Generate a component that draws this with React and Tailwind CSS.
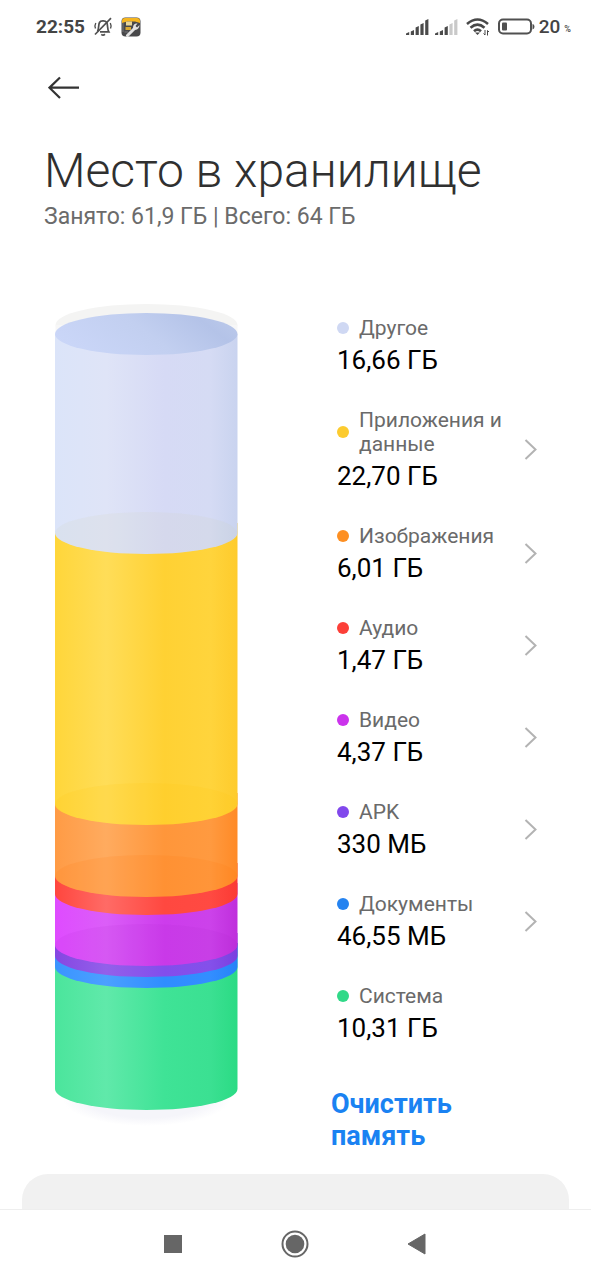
import React from "react";

const categories = [
  { name: "Другое", size: "16,66 ГБ", dot: "bg-[#cfd8f3]", link: false },
  { name: "Приложения и данные", size: "22,70 ГБ", dot: "bg-[#fccb2f]", link: true },
  { name: "Изображения", size: "6,01 ГБ", dot: "bg-[#fd8f22]", link: true },
  { name: "Аудио", size: "1,47 ГБ", dot: "bg-[#fc3f38]", link: true },
  { name: "Видео", size: "4,37 ГБ", dot: "bg-[#cb33ec]", link: true },
  { name: "APK", size: "330 МБ", dot: "bg-[#8148ec]", link: true },
  { name: "Документы", size: "46,55 МБ", dot: "bg-[#2583f0]", link: true },
  { name: "Система", size: "10,31 ГБ", dot: "bg-[#31d988]", link: false },
];

// Listed from the base up: each layer is painted over the one beneath it.
const layers = [
  { id: "system", top: 640, bottom: 786, stops: ["#4be59c", "#60e9aa", "#3fe396", "#3be092", "#2bdb84"] },
  { id: "docs", top: 640, bottom: 664, stops: ["#3a94ff", "#4ba0ff", "#2f8dff", "#338eff", "#2583f8"] },
  { id: "apk", top: 630, bottom: 653, stops: ["#8546e2", "#9360ea", "#824eec", "#8450ea", "#7a3fe0"] },
  { id: "video", top: 580, bottom: 642, stops: ["#df4bff", "#db5ef8", "#cd3cec", "#cc42ea", "#bf2fdc"] },
  { id: "audio", top: 560, bottom: 591, stops: ["#ff463e", "#ff6b66", "#ff4840", "#ff4a42", "#fb3a34"] },
  { id: "images", top: 490, bottom: 573, stops: ["#ff9b45", "#ffab5f", "#ff963a", "#ff9a40", "#ff8a26"] },
  { id: "apps", top: 220, bottom: 501, stops: ["#ffd63a", "#ffdd58", "#ffd133", "#ffd43c", "#fecb2c"] },
  { id: "other", top: 31, bottom: 230, stops: ["#dbe4f9", "#dfe4f7", "#d6daf5", "#d5dbf4", "#c9d3ef"] },
];

const backRims = [
  { y: 209, opacity: 0.1, color: "#d2cfa0" },
  { y: 480, opacity: 0.14, color: "#ffc30f" },
  { y: 552, opacity: 0.14, color: "#ff7a10" },
  { y: 621, opacity: 0.09, color: "#a81ccc" },
];

const offsets = ["0%", "28%", "60%", "85%", "100%"];

function StorageCylinder() {
  return (
    <svg width="185" height="824" viewBox="0 0 185 824" role="img" aria-label="Диаграмма хранилища" className="block shrink-0">
      <defs>
        {layers.map((l) => (
          <linearGradient key={l.id} id={l.id} x1="0" x2="1" y1="0" y2="0">
            {l.stops.map((c, i) => (
              <stop key={i} offset={offsets[i]} stopColor={c} />
            ))}
          </linearGradient>
        ))}
        <linearGradient id="lid" x1="0" x2="1" y1="0.6" y2="0.3">
          <stop offset="0%" stopColor="#cad6f8" />
          <stop offset="50%" stopColor="#c2cff0" />
          <stop offset="85%" stopColor="#b4c3e8" />
          <stop offset="100%" stopColor="#bac8ea" />
        </linearGradient>
        <radialGradient id="shade">
          <stop offset="70%" stopColor="#f5f5fa" />
          <stop offset="100%" stopColor="#ffffff" />
        </radialGradient>
      </defs>
      <ellipse cx="92.500" cy="796" rx="84" ry="27" fill="url(#shade)" />
      <ellipse cx="92.500" cy="22" rx="91" ry="21" fill="#f4f4f3" />
      <path d="M1.500 22H183.500V31H1.500Z" fill="#f7f7f7" />
      {layers.map((l) => (
        <path
          key={l.id}
          d={`M1 ${l.top}V${l.bottom}A91.25 21 0 0 0 183.5 ${l.bottom}V${l.top}Z`}
          fill={`url(#${l.id})`}
        />
      ))}
      {backRims.map((r) => (
        <ellipse key={r.y} cx="92.250" cy={r.y + 21} rx="91.250" ry="21" fill={r.color} opacity={r.opacity} />
      ))}
      <ellipse cx="92.250" cy="31" rx="91.250" ry="21" fill="url(#lid)" />
    </svg>
  );
}

function Signal({ strength }) {
  return (
    <svg width="23" height="17" viewBox="0 0 23 17" aria-hidden="true">
      {[3, 5, 9, 12, 16].map((h, i) => (
        <path
          key={i}
          d={`M${i * 4.8} 16V${17.5 - h}L${i * 4.8 + 3.2} ${16 - h}V16Z`}
          fill={i < strength ? "#4a4a4a" : "#c9c9c9"}
        />
      ))}
    </svg>
  );
}

function StatusBar() {
  return (
    <div className="flex h-[54px] items-center justify-between pr-5 pl-9 text-[#444]">
      <div className="flex items-center">
        <span className="text-[19px] leading-6 font-bold">22:55</span>
        <svg width="20" height="20" viewBox="0 0 20 20" fill="none" stroke="#505050" strokeWidth="1.700" className="ml-2" aria-hidden="true">
          <path d="M4.500 14.500C6 12.500 5.200 8 6.500 5.500C7.500 3.600 12 3.200 13.600 5.300C15.200 8 14 12 15.800 14.800H7" />
          <path d="M18 1.200L2 17.500" />
          <path d="M8.300 17.300Q10 18.800 12 17.300" />
          <path d="M2.800 6Q1.300 8.800 2.500 11.500M17.300 6Q18.700 8.800 17.500 11.500" strokeWidth="1.400" />
        </svg>
        <svg width="20" height="20" viewBox="0 0 20 20" className="ml-2" aria-hidden="true">
          <rect x="0.500" y="0.500" width="19" height="19" rx="4" fill="#48484a" />
          <path d="M1 6V4Q1 1 4 1H16Q19 1 19 4V6L14 4.500H6Z" fill="#f5b51f" />
          <rect x="5" y="4.500" width="6" height="4" fill="#e8d59a" />
          <rect x="4.500" y="10" width="5.500" height="3" fill="#d9a832" />
          <path d="M2 6V15M3.500 15H7" stroke="#77777a" strokeWidth="1" />
          <path d="M6.500 18.500L14 11" stroke="#e2e2e2" strokeWidth="3" strokeLinecap="round" />
          <path d="M18.500 8L16 10.500L14.500 9L16.500 6.500C13.500 6 11.500 8.500 12.300 11.200C13.500 14.200 18.500 13 18.500 8Z" fill="#e2e2e2" />
        </svg>
      </div>
      <div className="flex items-center">
        <Signal strength={5} />
        <span className="w-1.5" />
        <Signal strength={3} />
        <svg width="24" height="20" viewBox="0 0 24 20" fill="none" stroke="#484848" strokeWidth="2.600" className="ml-2" aria-hidden="true">
          <path d="M1 7Q11.500 -2 22 7" />
          <path d="M4.500 10.700Q11.500 4.500 18.500 10.700" />
          <path d="M8 14.200Q11.500 11 15 14.200" />
          <path d="M9 15.500H14L11.500 18Z" fill="#484848" stroke="none" />
          <path d="M19 13V18L17.500 16.500M21.500 18.500V13.500L23 15" strokeWidth="1" />
        </svg>
        <svg width="37" height="18" viewBox="0 0 37 18" className="ml-2" aria-hidden="true">
          <rect x="1" y="1.500" width="32" height="14" rx="4" fill="none" stroke="#505050" strokeWidth="2" />
          <rect x="4" y="4.500" width="5" height="8" rx="1" fill="#505050" />
          <path d="M34.500 6V11.500Q36.500 11 36.500 8.700T34.500 6Z" fill="#505050" />
        </svg>
        <span className="ml-1 text-[19px] leading-6 font-medium">20</span>
        <span className="ml-1 pt-1 text-[9px] leading-4 font-medium">%</span>
      </div>
    </div>
  );
}

function Category({ item }) {
  const Row = item.link ? "a" : "div";
  return (
    <li>
      <Row {...(item.link ? { href: "#" } : {})} className="flex items-center justify-between">
        <div className="w-[176px]">
          <div className="flex items-center gap-2.5">
            <span className={`size-3 shrink-0 rounded-full ${item.dot}`} />
            <span className="text-[21px] leading-6 text-[#6a6a6a]">{item.name}</span>
          </div>
          <div className="mt-1 text-[26px] leading-8 text-black">{item.size}</div>
        </div>
        {item.link && (
          <svg width="13" height="22" viewBox="0 0 13 22" fill="none" stroke="#b3b3b3" strokeWidth="2" aria-hidden="true">
            <path d="M1.500 1L11.500 10.500L1.500 20" />
          </svg>
        )}
      </Row>
    </li>
  );
}

export default function App() {
  return (
    <div className="flex min-h-screen flex-col bg-white font-['Roboto',sans-serif]">
      <StatusBar />
      <header className="px-11">
        <button type="button" aria-label="Назад" className="mt-5 ml-1 block h-7 w-8">
          <svg width="32" height="28" viewBox="0 0 32 28" fill="none" stroke="#333" strokeWidth="2.200" aria-hidden="true">
            <path d="M31 13.700H2M12 3.500L1.500 13.700L12 24" />
          </svg>
        </button>
        <h1 className="mt-[41px] text-[48px] leading-[56px] font-light text-[#303030]">Место в хранилище</h1>
        <p className="mt-1 text-[23px] leading-7 text-[#6b6b6b]">Занято: 61,9 ГБ | Всего: 64 ГБ</p>
      </header>
      <main className="mt-[72px] flex items-start justify-between pr-[54px] pl-[54px]">
        <StorageCylinder />
        <section className="w-[206px] pt-[13px]">
          <ul className="flex flex-col gap-8 pl-1.5">
            {categories.map((c) => (
              <Category key={c.name} item={c} />
            ))}
          </ul>
          <button type="button" className="mt-11 block w-[150px] text-left text-[27px] leading-8 font-bold text-[#1a82f2]">
            Очистить память
          </button>
        </section>
      </main>
      <div className="mx-[22px] mt-[22px] min-h-8 flex-1 rounded-t-[26px] bg-[#f1f1f1]" />
      <nav className="flex h-[71px] items-center justify-center border-t border-[#eeeeee] bg-white pr-0.5 pb-0.5">
        <button type="button" aria-label="Недавние" className="flex h-12 w-[122px] items-center justify-center">
          <svg width="18" height="18" viewBox="0 0 18 18" aria-hidden="true">
            <rect width="18" height="18" fill="#666" />
          </svg>
        </button>
        <button type="button" aria-label="Домой" className="flex h-12 w-[122px] items-center justify-center">
          <svg width="28" height="28" viewBox="0 0 28 28" aria-hidden="true">
            <circle cx="14" cy="14" r="12.500" fill="none" stroke="#666" strokeWidth="2" />
            <circle cx="14" cy="14" r="9.300" fill="#666" />
          </svg>
        </button>
        <button type="button" aria-label="Назад" className="flex h-12 w-[122px] items-center justify-center">
          <svg width="20" height="22" viewBox="0 0 20 22" aria-hidden="true">
            <path d="M18 1V21L1 11Z" fill="#666" stroke="#666" strokeWidth="1" strokeLinejoin="round" />
          </svg>
        </button>
      </nav>
    </div>
  );
}
